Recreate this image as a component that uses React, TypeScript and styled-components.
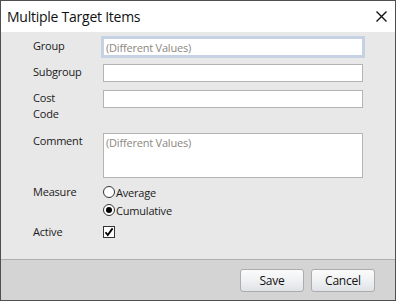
import React from "react";
import styled, { createGlobalStyle } from "styled-components";

const GlobalStyle = createGlobalStyle`
  html, body {
    margin: 0;
    padding: 0;
    background: #ffffff;
  }
  body {
    font-family: "Open Sans", "Noto Sans", sans-serif;
    color: #1a1a1a;
  }
`;

const Dialog = styled.div`
  width: 396px;
  height: 301px;
  box-sizing: border-box;
  border: 1px solid #4f4f4f;
  display: flex;
  flex-direction: column;
  background: #e8e8e8;
`;

const TitleBar = styled.div`
  height: 31px;
  background: #ffffff;
  display: flex;
  align-items: center;
  justify-content: space-between;
  padding: 0 8px 0 6px;
`;

const Title = styled.div`
  font-size: 14px;
  letter-spacing: -0.25px;
  color: #111;
  line-height: 20px;
`;

const CloseButton = styled.button`
  border: none;
  background: none;
  padding: 0;
  width: 11px;
  height: 11px;
  display: flex;
  cursor: pointer;
`;

const Body = styled.div`
  flex: 1;
  padding: 6px 32px 0 32px;
  display: flex;
  flex-direction: column;
  font-size: 11px;
  letter-spacing: -0.2px;
`;

const Row = styled.div<{ $top: number }>`
  display: grid;
  grid-template-columns: 70px 260px;
  align-items: start;
  margin-top: ${(p) => p.$top}px;
`;

const Label = styled.div<{ $pad?: number }>`
  line-height: 16px;
  padding-bottom: ${(p) => p.$pad ?? 0}px;
  color: #1a1a1a;
`;

const TextInput = styled.input<{ $focused?: boolean }>`
  box-sizing: border-box;
  width: 260px;
  height: 18px;
  margin: 0;
  padding: 0 2px;
  font-family: inherit;
  font-size: 11px;
  letter-spacing: -0.2px;
  background: #ffffff;
  border: 1px solid ${(p) => (p.$focused ? "#c6d2e4" : "#b4b4b4")};
  box-shadow: ${(p) => (p.$focused ? "0 0 0 2px #c6d2e4" : "none")};
  outline: none;
  &::placeholder {
    color: #8c8782;
  }
`;

const TextArea = styled.textarea`
  box-sizing: border-box;
  width: 260px;
  height: 45px;
  margin: 0;
  padding: 1px 2px;
  font-family: inherit;
  font-size: 11px;
  letter-spacing: -0.2px;
  line-height: 15px;
  background: #ffffff;
  border: 1px solid #b4b4b4;
  resize: none;
  outline: none;
  display: block;
  &::placeholder {
    color: #8c8782;
  }
`;

const Options = styled.div`
  display: flex;
  flex-direction: column;
`;

const Option = styled.label`
  display: flex;
  align-items: center;
  height: 18px;
  color: #1a1a1a;
  cursor: pointer;
`;

const RadioDot = styled.span<{ $checked: boolean }>`
  box-sizing: border-box;
  width: 12px;
  height: 12px;
  border-radius: 50%;
  border: 1px solid #333;
  background: #fff;
  margin-right: 1px;
  display: flex;
  align-items: center;
  justify-content: center;
  &::after {
    content: "";
    width: 6px;
    height: 6px;
    border-radius: 50%;
    background: ${(p) => (p.$checked ? "#000" : "transparent")};
  }
`;

const CheckBox = styled.span`
  box-sizing: border-box;
  width: 12px;
  height: 12px;
  border: 1px solid #333;
  background: #fff;
  display: flex;
  align-items: center;
  justify-content: center;
  margin-top: 2px;
`;

const Footer = styled.div`
  height: 41px;
  box-sizing: border-box;
  border-top: 1px solid #afafaf;
  background: #d4d4d4;
  display: flex;
  align-items: center;
  justify-content: flex-end;
  gap: 7px;
  padding-right: 20px;
`;

const Button = styled.button`
  box-sizing: border-box;
  width: 64px;
  height: 23px;
  border: 1px solid #acacac;
  border-radius: 3px;
  background: linear-gradient(#fbfbfb, #f1f2f4 45%, #dfe2e6);
  font-family: inherit;
  font-size: 12px;
  letter-spacing: -0.2px;
  color: #111;
  padding: 0;
  cursor: pointer;
`;

function App() {
  return (
    <>
      <GlobalStyle />
      <Dialog>
        <TitleBar>
          <Title>Multiple Target Items</Title>
          <CloseButton aria-label="Close">
            <svg width="11" height="11" viewBox="0 0 11 11">
              <path d="M0.5 0.5 L10.5 10.5 M10.5 0.5 L0.5 10.5" stroke="#111" strokeWidth="1.4" />
            </svg>
          </CloseButton>
        </TitleBar>
        <Body>
          <Row $top={0}>
            <Label>Group</Label>
            <TextInput $focused placeholder="(Different Values)" />
          </Row>
          <Row $top={8}>
            <Label>Subgroup</Label>
            <TextInput />
          </Row>
          <Row $top={8}>
            <Label>
              Cost
              <br />
              Code
            </Label>
            <TextInput />
          </Row>
          <Row $top={11}>
            <Label>Comment</Label>
            <TextArea placeholder="(Different Values)" />
          </Row>
          <Row $top={5}>
            <Label style={{ paddingTop: 1 }}>Measure</Label>
            <Options>
              <Option>
                <RadioDot $checked={false} />
                Average
              </Option>
              <Option>
                <RadioDot $checked />
                Cumulative
              </Option>
            </Options>
          </Row>
          <Row $top={5}>
            <Label>Active</Label>
            <CheckBox>
              <svg width="10" height="10" viewBox="0 0 10 10">
                <path d="M1.5 5.2 L3.8 8 L8.6 1.4" stroke="#000" strokeWidth="1.8" fill="none" />
              </svg>
            </CheckBox>
          </Row>
        </Body>
        <Footer>
          <Button>Save</Button>
          <Button>Cancel</Button>
        </Footer>
      </Dialog>
    </>
  );
}

export default App;
